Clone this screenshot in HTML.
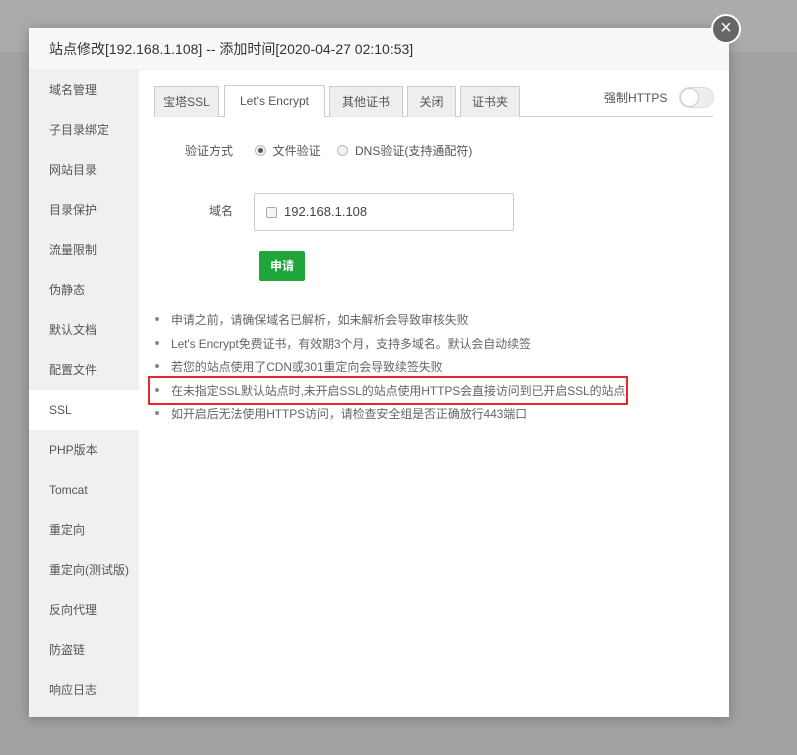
<!DOCTYPE html>
<html><head><meta charset="utf-8"><style>
*{margin:0;padding:0;box-sizing:border-box}
body{width:797px;height:755px;background:#a2a2a2;position:relative;overflow:hidden;font-family:"Liberation Sans","Noto Sans CJK SC",sans-serif;font-size:12px;color:#555}
.topband{position:absolute;left:0;top:0;width:797px;height:52px;background:#ababab}
.dlg{position:absolute;left:29px;top:28px;width:700px;height:689px;background:#fff;box-shadow:0 2px 12px rgba(0,0,0,.25)}
.hd{height:42px;background:#f8f8f8;border-bottom:1px solid #eee;padding-left:20px;line-height:42px;font-size:14px;color:#333}
.side{position:absolute;left:0;top:42px;width:110px;height:647px;background:#f0f0f0}
.side div{height:40px;line-height:40px;padding-left:20px;font-size:12px;color:#555}
.side .on{background:#fff}
.x{position:absolute;left:711px;top:14px;width:30px;height:30px;border-radius:50%;background:#666;border:2px solid #fff;color:#fff;font-size:20px;text-align:center;line-height:25px}
.tabbar{position:absolute;left:125px;top:57px;width:559px;height:32px;border-bottom:1px solid #ccc}
.tab{position:absolute;top:1px;height:31px;line-height:30px;text-align:center;background:#eee;border:1px solid #ccc;border-bottom:none;color:#555}
.tab.on{background:#fff;height:32px;top:0}
.tog{position:absolute;left:650px;top:59px;width:35px;height:21px;border-radius:11px;background:#eee;border:1px solid #ddd}
.tog i{position:absolute;left:0;top:0;width:19px;height:19px;border-radius:50%;background:#fff;border:1px solid #ccc}
.abs{position:absolute}
.radio{display:inline-block;width:11px;height:11px;border-radius:50%;border:1px solid #bbb;background:#f2f2f2;vertical-align:-1px;position:relative}
.radio.on::after{content:"";position:absolute;left:2px;top:2px;width:5px;height:5px;border-radius:50%;background:#555}
ul{position:absolute;left:155px;top:309px;list-style:none}
li{height:23.5px;line-height:23.5px;color:#666;letter-spacing:-0.1px}
li::before{content:"";display:inline-block;width:4px;height:4px;border-radius:50%;background:#888;margin-right:12px;vertical-align:3px}
</style></head><body>
<div class="topband"></div>
<div class="dlg">
<div class="hd">站点修改[192.168.1.108] -- 添加时间[2020-04-27 02:10:53]</div>
<div class="side">
<div>域名管理</div><div>子目录绑定</div><div>网站目录</div><div>目录保护</div><div>流量限制</div><div>伪静态</div><div>默认文档</div><div>配置文件</div><div class="on">SSL</div><div>PHP版本</div><div>Tomcat</div><div>重定向</div><div>重定向(测试版)</div><div>反向代理</div><div>防盗链</div><div>响应日志</div>
</div>
<div class="tabbar">
<div class="tab" style="left:0;width:65px">宝塔SSL</div>
<div class="tab on" style="left:70px;width:101px">Let's Encrypt</div>
<div class="tab" style="left:175px;width:74px">其他证书</div>
<div class="tab" style="left:253px;width:49px">关闭</div>
<div class="tab" style="left:306px;width:60px">证书夹</div>
</div>
<div class="abs" style="left:575px;top:61px;color:#555">强制HTTPS</div>
<div class="tog"><i></i></div>
<div class="abs" style="left:156px;top:114px;color:#555">验证方式</div>
<div class="abs" style="left:226px;top:114px;color:#555"><span class="radio on"></span>&nbsp; 文件验证 &nbsp;&nbsp;&nbsp;&nbsp;<span class="radio"></span>&nbsp; DNS验证(支持通配符)</div>
<div class="abs" style="left:180px;top:174px;color:#555">域名</div>
<div class="abs" style="left:225px;top:165px;width:260px;height:38px;border:1px solid #ccc;border-radius:2px"><span class="abs" style="left:11px;top:13px;width:11px;height:11px;border:1px solid #aaa;border-radius:2px;background:#f5f5f5"></span><span class="abs" style="left:29px;top:10px;color:#444;font-size:13px">192.168.1.108</span></div>
<div class="abs" style="left:230px;top:223px;width:46px;height:30px;background:#20a53a;border-radius:2px;color:#fff;text-align:center;line-height:30px;font-weight:bold">申请</div>
</div>
<ul>
<li>申请之前，请确保域名已解析，如未解析会导致审核失败</li>
<li>Let's Encrypt免费证书，有效期3个月，支持多域名。默认会自动续签</li>
<li>若您的站点使用了CDN或301重定向会导致续签失败</li>
<li>在未指定SSL默认站点时,未开启SSL的站点使用HTTPS会直接访问到已开启SSL的站点</li>
<li>如开启后无法使用HTTPS访问，请检查安全组是否正确放行443端口</li>
</ul>
<div class="abs" style="left:148px;top:376px;width:480px;height:29px;border:2px solid #e8272d"></div>
<div class="x">×</div>
</body></html>
